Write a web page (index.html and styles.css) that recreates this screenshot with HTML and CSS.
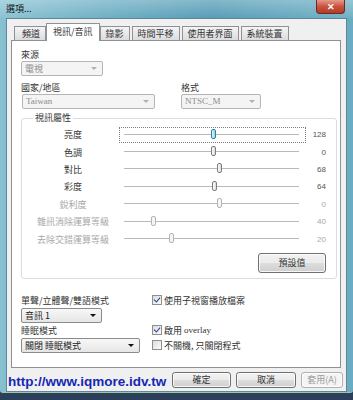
FILE: index.html
```html
<!DOCTYPE html>
<html lang="zh-Hant">
<head>
  <meta charset="UTF-8">
  <title>選項...</title>
  <link rel="stylesheet" href="styles.css">
</head>
<body>
  <div class="window">
    <div class="titlebar">
      <span class="title">選項...</span>
      <span class="close">✕</span>
    </div>

    <div class="client">
      <div class="tabs">
        <div class="tab">頻道</div>
        <div class="tab active">視訊/音訊</div>
        <div class="tab">錄影</div>
        <div class="tab">時間平移</div>
        <div class="tab">使用者界面</div>
        <div class="tab">系統裝置</div>
      </div>

      <div class="panel">
        <div class="label">來源</div>
        <div class="select disabled w-source"><span>電視</span><span class="arrow"></span></div>

        <div class="row2">
          <div class="field">
            <div class="label">國家/地區</div>
            <div class="select disabled w-country"><span class="latin">Taiwan</span><span class="arrow"></span></div>
          </div>
          <div class="field">
            <div class="label">格式</div>
            <div class="select disabled w-format"><span class="latin">NTSC_M</span><span class="arrow"></span></div>
          </div>
        </div>

        <fieldset class="group">
          <legend>視訊屬性</legend>
          <div class="sliders">
            <div class="s-label">亮度</div>
            <div class="slider focus"><div class="track"><span class="thumb hot" style="left: 89px"></span></div></div>
            <div class="s-value">128</div>

            <div class="s-label">色調</div>
            <div class="slider"><div class="track"><span class="thumb" style="left: 89px"></span></div></div>
            <div class="s-value">0</div>

            <div class="s-label">對比</div>
            <div class="slider"><div class="track"><span class="thumb" style="left: 95px"></span></div></div>
            <div class="s-value">68</div>

            <div class="s-label">彩度</div>
            <div class="slider"><div class="track"><span class="thumb" style="left: 90px"></span></div></div>
            <div class="s-value">64</div>

            <div class="s-label off">銳利度</div>
            <div class="slider off"><div class="track"><span class="thumb" style="left: 95px"></span></div></div>
            <div class="s-value off">0</div>

            <div class="s-label off">雜訊消除運算等級</div>
            <div class="slider off"><div class="track"><span class="thumb" style="left: 29px"></span></div></div>
            <div class="s-value off">40</div>

            <div class="s-label off">去除交錯運算等級</div>
            <div class="slider off"><div class="track"><span class="thumb" style="left: 47px"></span></div></div>
            <div class="s-value off">20</div>
          </div>
          <div class="group-actions">
            <button class="btn btn-default">預設值</button>
          </div>
        </fieldset>

        <div class="bottom">
          <div class="label">單聲/立體聲/雙語模式</div>
          <div class="check"><span class="box checked"></span>使用子視窗播放檔案</div>
          <div class="select w-audio"><span>音訊 1</span><span class="arrow"></span></div>
          <div></div>
          <div class="label">睡眠模式</div>
          <div class="check"><span class="box checked"></span>啟用 <span class="latin">overlay</span></div>
          <div class="select w-sleep"><span>關閉 睡眠模式</span><span class="arrow"></span></div>
          <div class="check"><span class="box"></span>不關機, 只關閉程式</div>
        </div>
      </div>

      <div class="footer">
        <a class="site" href="#">http://www.iqmore.idv.tw</a>
        <div class="buttons">
          <button class="btn b-ok">確定</button>
          <button class="btn b-cancel">取消</button>
          <button class="btn b-apply" disabled>套用(A)</button>
        </div>
      </div>
    </div>
  </div>
</body>
</html>
```

FILE: styles.css
```css
body {
  margin: 0;
  width: 353px;
  height: 400px;
  overflow: hidden;
  font-family: "Noto Sans CJK TC", "Liberation Sans", sans-serif;
  font-size: 9px;
  color: #333;
  background: #2c3f5a;
}

.window {
  height: 392px;
  display: flex;
  flex-direction: column;
  background: linear-gradient(to right, #86c0d1 0%, #66abc1 30%, #4f98b3 60%, #6aadc3 100%);
  border-bottom: 1px solid #9dc7a8;
  border-radius: 0 0 3px 3px;
}

.titlebar {
  height: 18px;
  display: flex;
  align-items: flex-start;
  justify-content: space-between;
  background: linear-gradient(to bottom, rgba(255, 255, 255, 0.3), rgba(255, 255, 255, 0.05));
}

.title {
  margin: 3px 0 0 6px;
  font-size: 9px;
  line-height: 12px;
  color: #111;
}

.close {
  width: 29px;
  height: 14px;
  margin-right: 8px;
  border: 1px solid #6b2a22;
  border-top: none;
  border-radius: 0 0 4px 4px;
  background: linear-gradient(to bottom, #e59a8c 0%, #c9533f 50%, #b43a26 100%);
  color: #fff;
  font-size: 9px;
  font-weight: bold;
  line-height: 13px;
  text-align: center;
  box-sizing: border-box;
}

.client {
  flex: 1;
  margin: 0 6px 0 6px;
  background: #f0f0f0;
  border: 1px solid #5f8799;
  display: flex;
  flex-direction: column;
  box-sizing: border-box;
}

/* tabs */
.tabs {
  display: flex;
  align-items: flex-end;
  padding-left: 7px;
  margin-top: 4px;
  height: 17px;
  position: relative;
  z-index: 1;
}

.tab {
  height: 14px;
  line-height: 14px;
  padding: 0 5px;
  margin-right: 2px;
  border: 1px solid #8e9199;
  border-bottom: none;
  background: linear-gradient(to bottom, #f4f4f4, #dcdcdc);
  box-sizing: border-box;
  color: #333;
}

.tab:first-child {
  width: 32px;
  padding-left: 7px;
}

.tab.active {
  height: 18px;
  line-height: 15px;
  margin: 0 0 -1px -2px;
  padding: 0 6px;
  background: #fff;
}

.panel {
  height: 328px;
  margin: 0 5px 0 4px;
  padding: 7px 0 0 9px;
  background: #fff;
  border: 1px solid #8e9199;
  box-sizing: border-box;
}

.label {
  height: 13px;
  line-height: 13px;
  color: #333;
}

.latin {
  font-family: "Liberation Serif", serif;
}

/* combo boxes */
.select {
  height: 15px;
  display: flex;
  align-items: center;
  justify-content: space-between;
  padding: 0 5px 0 3px;
  border: 1px solid #8b8b8b;
  border-radius: 2px;
  background: linear-gradient(to bottom, #f7f7f7, #e6e6e6);
  box-sizing: border-box;
  color: #222;
  line-height: 13px;
}

.select.disabled {
  border-color: #b5b5b5;
  background: #f4f4f4;
  color: #8d8d8d;
}

.arrow {
  width: 0;
  height: 0;
  border-left: 3px solid transparent;
  border-right: 3px solid transparent;
  border-top: 3px solid #111;
}

.select.disabled .arrow {
  border-top-color: #b0b0b0;
}

.w-source { width: 82px; }
.w-country { width: 133px; margin-left: 1px; }
.w-format { width: 80px; }
.w-audio { width: 81px; }
.w-sleep { width: 119px; }

.row2 {
  display: flex;
  gap: 26px;
  margin-top: 5px;
}

/* video properties group */
.group {
  width: 312px;
  margin: 3px 0 0 0;
  padding: 2px 10px 5px 8px;
  border: 1px solid #d5dfe5;
  border-radius: 3px;
  box-sizing: border-box;
}

.group legend {
  padding: 0 2px;
  margin-left: 3px;
  line-height: 12px;
  color: #333;
}

.sliders {
  display: grid;
  grid-template-columns: 86px 187px 17px;
  grid-auto-rows: 17.4px;
  column-gap: 3px;
  align-items: center;
}

.s-label {
  text-align: center;
  white-space: nowrap;
}

.s-value {
  text-align: right;
  font-family: "Liberation Sans", sans-serif;
  font-size: 8px;
  color: #555;
}

.off {
  color: #a8a8a8;
}

.slider {
  height: 16px;
  padding: 0 6px 0 4px;
  display: flex;
  align-items: center;
  border: 1px dotted transparent;
  box-sizing: border-box;
}

.slider.focus {
  border-color: #7a7a7a;
}

.track {
  flex: 1;
  height: 1px;
  background: #b9b9b9;
  border-bottom: 1px solid #fff;
  position: relative;
}

.thumb {
  position: absolute;
  top: -5px;
  left: 0;
  width: 5px;
  height: 10px;
  margin-left: -2px;
  border: 1px solid #7d7d7d;
  border-radius: 2px;
  background: linear-gradient(to right, #fdfdfd, #dadada);
  box-sizing: border-box;
}

.thumb.hot {
  border-color: #2c7ea4;
  background: linear-gradient(to right, #e4f6fd, #8fd1ea);
}

.slider.off .thumb {
  border-color: #b4b4b4;
  background: #f6f6f6;
}

.group-actions {
  display: flex;
  justify-content: flex-end;
  margin-top: 5px;
}

.btn {
  height: 20px;
  padding: 0;
  font-family: "Noto Sans CJK TC", "Liberation Sans", sans-serif;
  font-size: 9px;
  color: #333;
  border: 1px solid #707070;
  border-radius: 3px;
  background: linear-gradient(to bottom, #f2f2f2 0%, #ebebeb 48%, #dddddd 52%, #cfcfcf 100%);
  box-shadow: inset 0 0 0 1px rgba(255, 255, 255, 0.8);
}

.btn-default {
  width: 68px;
}

/* bottom options */
.bottom {
  display: grid;
  grid-template-columns: 131px auto;
  grid-template-rows: 13px 15px 13px 15px;
  row-gap: 1px;
  margin-top: 15px;
  align-items: center;
}

.check {
  display: flex;
  align-items: center;
  gap: 2px;
  line-height: 13px;
}

.box {
  width: 10px;
  height: 10px;
  border: 1px solid #8f8f8f;
  background: linear-gradient(135deg, #dcdcdc, #fbfbfb);
  box-sizing: border-box;
  position: relative;
}

.box.checked::after {
  content: "";
  position: absolute;
  left: 2px;
  top: 0;
  width: 3px;
  height: 5px;
  border-right: 1.5px solid #27408b;
  border-bottom: 1.5px solid #27408b;
  transform: rotate(40deg);
}

/* dialog footer */
.footer {
  flex: 1;
  display: flex;
  align-items: center;
  justify-content: space-between;
  padding: 0 3px 0 1px;
}

.site {
  font-family: "Liberation Sans", sans-serif;
  font-size: 13.5px;
  font-weight: bold;
  color: #1428b4;
  text-decoration: none;
  margin-top: 3px;
}

.buttons {
  display: flex;
  gap: 5px;
  margin-top: 1px;
}

.buttons .btn {
  height: 16px;
  line-height: 14px;
}

.b-ok { width: 59px; }
.b-cancel { width: 60px; }
.b-apply {
  width: 42px;
  color: #9a9a9a;
  border-color: #b0b0b0;
  background: #f4f4f4;
}
```
